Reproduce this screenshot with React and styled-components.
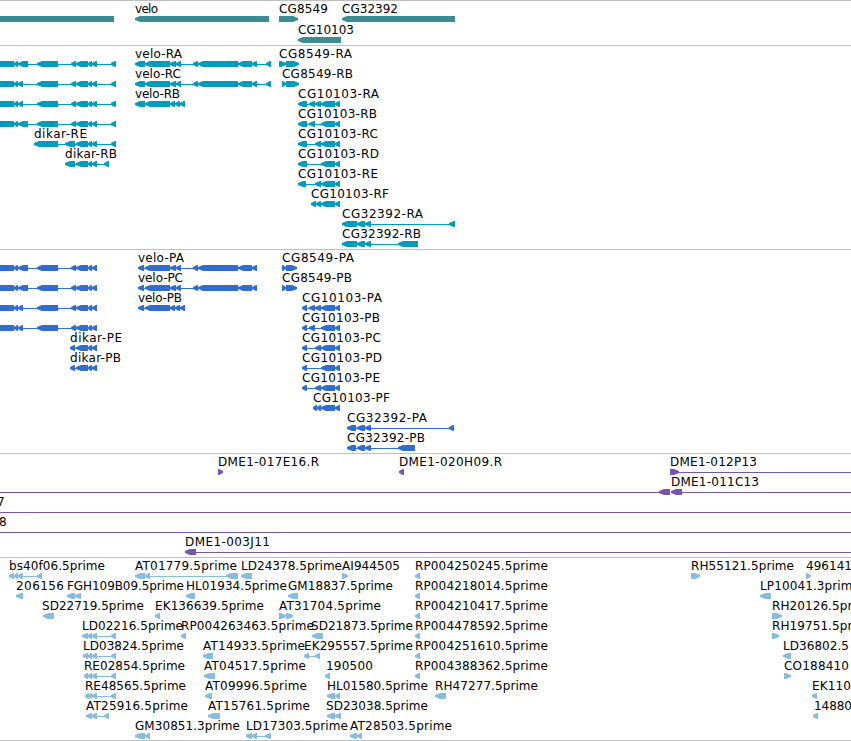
import styled, { createGlobalStyle } from "styled-components";

const VIEW_WIDTH = 851;
const BAR_TOP = 15;
const BAR_HEIGHT = 6;
const HEAD = 5; // length of the arrow head

// a feature is { row, label, x, end, parts, dir, line }
// parts are [start, stop] pairs, line is the thin connector behind them
const f = (row, label, x, end, parts, dir = "left", line) => ({
  row,
  label,
  x,
  end,
  parts,
  dir,
  line,
});

const genes = [
  f(0, "", 0, 0, [[-20, 114]]),
  f(0, "velo", 135, 158, [[135, 269]]),
  f(0, "CG8549", 279, 328, [[279, 298]], "right"),
  f(0, "CG32392", 342, 398, [[342, 455]]),
  f(1, "CG10103", 298, 354, [[298, 341]]),
];

const dikarMid = [[37, 58], [71, 76], [76, 88], [88, 92], [92, 97]];
const dikarLong = [[-20, 14], [14, 18], [18, 28], ...dikarMid];
const dikarShort = [[-20, 14], [14, 18], [18, 23], ...dikarMid];
const dikarTail = [[76, 88], [88, 92], [92, 97]];
const veloMid = [[145, 170], [170, 176], [176, 181], [193, 198], [198, 238], [238, 252], [252, 257]];
const veloShort = [[145, 170], [170, 175], [175, 180], [180, 185]];
const cgEnd = [[321, 335], [335, 340]];
const cg32Mid = [[357, 365], [365, 371]];

const transcripts = [
  f(0, "", 0, 0, [...dikarLong, [111, 116]]),
  f(1, "", 0, 0, [...dikarShort, [111, 116]]),
  f(2, "", 0, 0, [...dikarShort, [111, 116]]),
  f(3, "", 0, 0, [...dikarLong, [111, 116]]),
  f(4, "dikar-RE", 34, 87, [[34, 58], [65, 75], ...dikarTail, [111, 116]]),
  f(5, "dikar-RB", 65, 117, [[65, 75], ...dikarTail, [104, 109]]),
  f(0, "velo-RA", 135, 182, [[135, 145], ...veloMid, [266, 271]]),
  f(1, "velo-RC", 135, 181, [[135, 145], ...veloMid, [266, 271]]),
  f(2, "velo-RB", 135, 180, [[135, 145], ...veloShort]),
  f(0, "CG8549-RA", 279, 352, [[279, 286], [286, 299]], "right"),
  f(1, "CG8549-RB", 282, 353, [[282, 286], [286, 299]], "right"),
  f(2, "CG10103-RA", 298, 379, [[298, 307], [309, 315], [315, 321], ...cgEnd]),
  f(3, "CG10103-RB", 298, 377, [[298, 307], [309, 315], ...cgEnd]),
  f(4, "CG10103-RC", 298, 378, [[298, 307], [315, 321], ...cgEnd]),
  f(5, "CG10103-RD", 298, 379, [[298, 307], ...cgEnd]),
  f(6, "CG10103-RE", 298, 378, [[298, 306], [315, 321], ...cgEnd]),
  f(7, "CG10103-RF", 311, 389, [[311, 316], [316, 321], ...cgEnd]),
  f(8, "CG32392-RA", 342, 423, [[342, 357], ...cg32Mid, [449, 455]]),
  f(9, "CG32392-RB", 342, 421, [[342, 357], ...cg32Mid, [398, 418]]),
];

const proteins = [
  f(0, "", 0, 0, dikarLong),
  f(1, "", 0, 0, dikarLong),
  f(2, "", 0, 0, dikarShort),
  f(3, "", 0, 0, dikarShort),
  f(4, "dikar-PE", 70, 122, [[70, 75], ...dikarTail]),
  f(5, "dikar-PB", 70, 121, [[70, 75], ...dikarTail]),
  f(0, "velo-PA", 138, 184, [[138, 144], ...veloMid]),
  f(1, "velo-PC", 138, 183, [[138, 144], ...veloMid]),
  f(2, "velo-PB", 138, 182, [[138, 144], ...veloShort]),
  f(0, "CG8549-PA", 282, 354, [[282, 286], [286, 297]], "right"),
  f(1, "CG8549-PB", 282, 352, [[282, 286], [286, 297]], "right"),
  f(2, "CG10103-PA", 302, 382, [[302, 307], [309, 315], [315, 321], ...cgEnd]),
  f(3, "CG10103-PB", 302, 380, [[302, 307], [309, 315], ...cgEnd]),
  f(4, "CG10103-PC", 302, 381, [[302, 307], [315, 321], ...cgEnd]),
  f(5, "CG10103-PD", 302, 382, [[302, 307], ...cgEnd]),
  f(6, "CG10103-PE", 302, 380, [[302, 307], [315, 321], ...cgEnd]),
  f(7, "CG10103-PF", 313, 390, [[313, 317], [317, 321], ...cgEnd]),
  f(8, "CG32392-PA", 347, 427, [[347, 356], ...cg32Mid, [449, 454]]),
  f(9, "CG32392-PB", 347, 425, [[347, 356], ...cg32Mid, [398, 415]]),
];

const clones = [
  f(0, "DME1-017E16.R", 218, 319, [[218, 223]], "right"),
  f(0, "DME1-020H09.R", 399, 502, [[399, 404]]),
  f(0, "DME1-012P13", 670, 757, [[670, 679]], "right", [670, 851]),
  f(1, "", 0, 0, [[659, 670]], "left", [0, 670]),
  f(1, "DME1-011C13", 671, 759, [[671, 682]], "left", [671, 851]),
  f(2, "7", -3, 5, [], "left", [0, 851]),
  f(3, "8", -1, 7, [], "left", [0, 851]),
  f(4, "DME1-003J11", 185, 270, [[185, 196]], "left", [185, 851]),
];

const ests = [
  f(0, "bs40f06.5prime", 9, 105, [[9, 14], [14, 18], [18, 23], [37, 42]]),
  f(0, "AT01779.5prime", 135, 237, [[135, 145], [145, 150], [226, 238]]),
  f(0, "LD24378.5prime", 241, 342, [[241, 252]]),
  f(0, "AI944505", 342, 400, [[342, 348]], "right"),
  f(0, "RP004250245.5prime", 415, 548, [[415, 420]]),
  f(0, "RH55121.5prime", 691, 794, [[691, 700]], "right"),
  f(0, "496141", 806, 852, [[806, 811]], "right"),
  f(1, "206156", 16, 64, [[16, 23]]),
  f(1, "FGH109B09.5prime", 67, 184, [[67, 75], [75, 81]]),
  f(1, "HL01934.5prime", 186, 287, [[186, 195]]),
  f(1, "GM18837.5prime", 288, 393, [[288, 298]]),
  f(1, "RP004218014.5prime", 415, 548, [[415, 420]]),
  f(1, "LP10041.3prime", 760, 860, [[760, 771]]),
  f(2, "SD22719.5prime", 42, 144, [[43, 54]]),
  f(2, "EK136639.5prime", 155, 264, [[155, 160]]),
  f(2, "AT31704.5prime", 279, 381, [[279, 286], [286, 293]], "right"),
  f(2, "RP004210417.5prime", 415, 548, [[415, 420]]),
  f(2, "RH20126.5prime", 772, 875, [[772, 782]], "right"),
  f(3, "LD02216.5prime", 82, 183, [[82, 88], [88, 92], [92, 97], [111, 116]]),
  f(3, "RP004263463.5prime", 181, 314, [[181, 186]]),
  f(3, "SD21873.5prime", 311, 413, [[312, 323]]),
  f(3, "RP004478592.5prime", 415, 548, [[415, 420]]),
  f(3, "RH19751.5prime", 772, 875, [[772, 779]], "right"),
  f(4, "LD03824.5prime", 83, 184, [[83, 88], [88, 92], [92, 97], [111, 116]]),
  f(4, "AT14933.5prime", 203, 305, [[203, 213]]),
  f(4, "EK295557.5prime", 304, 413, [[304, 309], [315, 320]]),
  f(4, "RP004251610.5prime", 415, 548, [[415, 420]]),
  f(4, "LD36802.5", 783, 849, [[783, 791]]),
  f(5, "RE02854.5prime", 84, 185, [[84, 88], [88, 92], [92, 97], [111, 116]]),
  f(5, "AT04517.5prime", 204, 306, [[204, 215]]),
  f(5, "190500", 326, 373, [[325, 330]]),
  f(5, "RP004388362.5prime", 415, 548, [[415, 420]]),
  f(5, "CO188410", 784, 849, [[784, 791]], "right"),
  f(6, "RE48565.5prime", 85, 186, [[85, 89], [89, 92], [92, 97], [111, 116]]),
  f(6, "AT09996.5prime", 205, 307, [[205, 212]]),
  f(6, "HL01580.5prime", 327, 428, [[327, 335], [335, 340]]),
  f(6, "RH47277.5prime", 435, 538, [[435, 446]]),
  f(6, "EK110", 812, 851, [[812, 817]]),
  f(7, "AT25916.5prime", 86, 188, [[86, 92], [92, 97], [104, 109]]),
  f(7, "AT15761.5prime", 208, 310, [[208, 220]]),
  f(7, "SD23038.5prime", 326, 428, [[327, 335], [335, 341]]),
  f(7, "14880", 814, 852, [[813, 818]]),
  f(8, "GM30851.3prime", 135, 240, [[135, 145], [145, 150]]),
  f(8, "LD17303.5prime", 246, 348, [[246, 252], [252, 257], [265, 271]]),
  f(8, "AT28503.5prime", 350, 452, [[350, 357], [357, 362]]),
];

const tracks = [
  { name: "genes", height: 45, rowHeight: 21, color: "#3d8c91", features: genes },
  { name: "transcripts", height: 204, rowHeight: 20, color: "#009cbd", features: transcripts },
  { name: "proteins", height: 204, rowHeight: 20, color: "#306dcd", features: proteins },
  { name: "clones", height: 104, rowHeight: 20, color: "#7556a8", features: clones },
  { name: "ests", height: 183, rowHeight: 20, color: "#87bcde", features: ests },
];

// block arrow with a blunt tip, the short ones are nearly all head
const arrowPoints = ([start, stop], dir, top) => {
  const head = Math.min(HEAD, stop - start - 1);
  const mid = top + BAR_HEIGHT / 2;
  const bottom = top + BAR_HEIGHT;

  if (dir === "right") {
    const neck = stop - head;
    return `${start},${top} ${neck},${top} ${stop},${mid - 1} ${stop},${mid + 1} ${neck},${bottom} ${start},${bottom}`;
  }
  const neck = start + head;
  return `${start},${mid - 1} ${neck},${top} ${stop},${top} ${stop},${bottom} ${neck},${bottom} ${start},${mid + 1}`;
};

const Feature = ({ feature, rowHeight }) => {
  const { row, label, x, end, parts, dir } = feature;
  const top = row * rowHeight + BAR_TOP;
  const line = feature.line || [parts[0][0] + 2, parts[parts.length - 1][1] - 2];

  return (
    <g>
      <rect x={line[0]} y={top + 3} width={line[1] - line[0]} height={1} />
      {parts.map((part) => (
        <polygon key={part[0]} points={arrowPoints(part, dir, top)} />
      ))}
      {label && (
        <Label x={x} y={top - 3} textLength={end - x}>
          {label}
        </Label>
      )}
    </g>
  );
};

const App = () => {
  return (
    <>
      <GlobalStyle />
      <Browser>
        {tracks.map((track) => (
          <Track key={track.name} $height={track.height}>
            <Canvas width={VIEW_WIDTH} height={track.height - 1} $color={track.color}>
              {track.features.map((feature, i) => (
                <Feature key={i} feature={feature} rowHeight={track.rowHeight} />
              ))}
            </Canvas>
          </Track>
        ))}
      </Browser>
    </>
  );
};

export default App;

const GlobalStyle = createGlobalStyle`
  body {
    margin: 0;
    background: #ffffff;
  }
`;

const Browser = styled.main`
  width: 851px;
  height: 741px;
  box-sizing: border-box;
  overflow: hidden;
  border-bottom: 1px solid #bebebe;
`;

const Track = styled.section`
  box-sizing: border-box;
  height: ${(props) => props.$height}px;
  border-top: 1px solid #bebebe;
`;

const Canvas = styled.svg`
  display: block;
  fill: ${(props) => props.$color};
`;

const Label = styled.text`
  fill: #000000;
  font-family: "DejaVu Sans", sans-serif;
  font-size: 12px;
`;
